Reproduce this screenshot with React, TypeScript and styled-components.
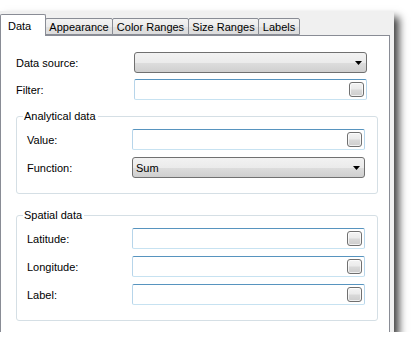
import React from 'react';
import styled, { createGlobalStyle } from 'styled-components';

const GlobalStyle = createGlobalStyle`
  body {
    margin: 0;
    background: #ffffff;
    font-family: 'Liberation Sans', Arial, sans-serif;
    font-size: 11px;
    color: #000000;
  }
`;

const Window = styled.div`
  box-sizing: border-box;
  width: 394px;
  height: 321px;
  margin-top: 11px;
  padding-right: 4px;
  background: #f0f0f0;
  display: flex;
  flex-direction: column;
  box-shadow: 5px 6px 8px rgba(0, 0, 0, 0.75);
`;

const TabStrip = styled.div`
  display: flex;
  align-items: flex-end;
  height: 24px;
  padding-top: 4px;
  box-sizing: border-box;
`;

const Tab = styled.div<{ $active?: boolean; $width: number }>`
  box-sizing: border-box;
  width: ${({ $width }) => $width}px;
  height: ${({ $active }) => ($active ? 22 : 17)}px;
  margin-left: ${({ $active }) => ($active ? 0 : -1)}px;
  margin-bottom: ${({ $active }) => ($active ? -1 : 0)}px;
  border: 1px solid #898c95;
  border-bottom: ${({ $active }) => ($active ? 'none' : '1px solid #898c95')};
  border-radius: 2px 2px 0 0;
  background: ${({ $active }) =>
    $active ? '#ffffff' : 'linear-gradient(#f3f3f3, #ebebeb 50%, #e1e1e1 51%, #dcdcdc)'};
  position: relative;
  z-index: ${({ $active }) => ($active ? 2 : 1)};
  display: flex;
  align-items: center;
  justify-content: ${({ $active }) => ($active ? 'flex-start' : 'center')};
  padding-left: ${({ $active }) => ($active ? 7 : 0)}px;
  white-space: nowrap;
`;

const Panel = styled.div`
  box-sizing: border-box;
  flex: 1;
  width: 390px;
  background: #ffffff;
  border: 1px solid #898c95;
  border-bottom: none;
  padding: 16px 0 0 15px;
  display: flex;
  flex-direction: column;
`;

const Rows = styled.div<{ $gap: number }>`
  display: flex;
  flex-direction: column;
  gap: ${({ $gap }) => $gap}px;
`;

const Row = styled.div`
  display: flex;
  align-items: center;
  height: 21px;
`;

const Label = styled.span<{ $width: number }>`
  width: ${({ $width }) => $width}px;
  flex-shrink: 0;
`;

const Combo = styled.div`
  box-sizing: border-box;
  width: 233px;
  height: 21px;
  border: 1px solid #707070;
  border-radius: 3px;
  background: linear-gradient(#f2f2f2, #ebebeb 50%, #dddddd 51%, #cfcfcf);
  display: flex;
  align-items: center;
  justify-content: space-between;
  padding: 0 4px 0 3px;
`;

const TextBox = styled.div`
  box-sizing: border-box;
  width: 233px;
  height: 21px;
  border: 1px solid #b7d5ea;
  border-top-color: #5794bf;
  border-bottom-color: #c7e2f1;
  border-radius: 2px;
  background: #ffffff;
  display: flex;
  align-items: center;
  justify-content: flex-end;
  padding-right: 2px;
`;

const MiniButton = styled.div`
  box-sizing: border-box;
  width: 15px;
  height: 15px;
  border: 1px solid #707070;
  border-radius: 3px;
  background: linear-gradient(#f4f4f4, #ebebeb 45%, #d9d9d9 55%, #cdcdcd);
  box-shadow: inset 0 0 0 1px rgba(255, 255, 255, 0.7);
`;

const Group = styled.fieldset<{ $top: number }>`
  box-sizing: border-box;
  width: 362px;
  margin: ${({ $top }) => $top}px 0 0 0;
  padding: 6px 0 15px 10px;
  border: 1px solid #d5dfe5;
  border-radius: 3px;
  min-inline-size: auto;
`;

const Legend = styled.legend`
  padding: 0 2px 0 1px;
  margin-left: -4px;
  line-height: 13px;
`;

const Arrow = () => (
  <svg width="7" height="4" viewBox="0 0 7 4">
    <polygon points="0,0 7,0 3.5,4" fill="#000" />
  </svg>
);

const Dropdown = ({ value }: { value?: string }) => (
  <Combo>
    <span>{value}</span>
    <Arrow />
  </Combo>
);

const Field = () => (
  <TextBox>
    <MiniButton />
  </TextBox>
);

const tabs = [
  { name: 'Data', width: 46, active: true },
  { name: 'Appearance', width: 68 },
  { name: 'Color Ranges', width: 77 },
  { name: 'Size Ranges', width: 71 },
  { name: 'Labels', width: 42 },
];

export default function App() {
  return (
    <>
      <GlobalStyle />
      <Window>
        <TabStrip>
          {tabs.map((t) => (
            <Tab key={t.name} $active={t.active} $width={t.width}>
              {t.name}
            </Tab>
          ))}
        </TabStrip>
        <Panel>
          <Rows $gap={6}>
            <Row>
              <Label $width={118}>Data source:</Label>
              <Dropdown />
            </Row>
            <Row>
              <Label $width={118}>Filter:</Label>
              <Field />
            </Row>
          </Rows>
          <Group $top={10}>
            <Legend>Analytical data</Legend>
            <Rows $gap={7}>
              <Row>
                <Label $width={105}>Value:</Label>
                <Field />
              </Row>
              <Row>
                <Label $width={105}>Function:</Label>
                <Dropdown value="Sum" />
              </Row>
            </Rows>
          </Group>
          <Group $top={15}>
            <Legend>Spatial data</Legend>
            <Rows $gap={7}>
              <Row>
                <Label $width={105}>Latitude:</Label>
                <Field />
              </Row>
              <Row>
                <Label $width={105}>Longitude:</Label>
                <Field />
              </Row>
              <Row>
                <Label $width={105}>Label:</Label>
                <Field />
              </Row>
            </Rows>
          </Group>
        </Panel>
      </Window>
    </>
  );
}
